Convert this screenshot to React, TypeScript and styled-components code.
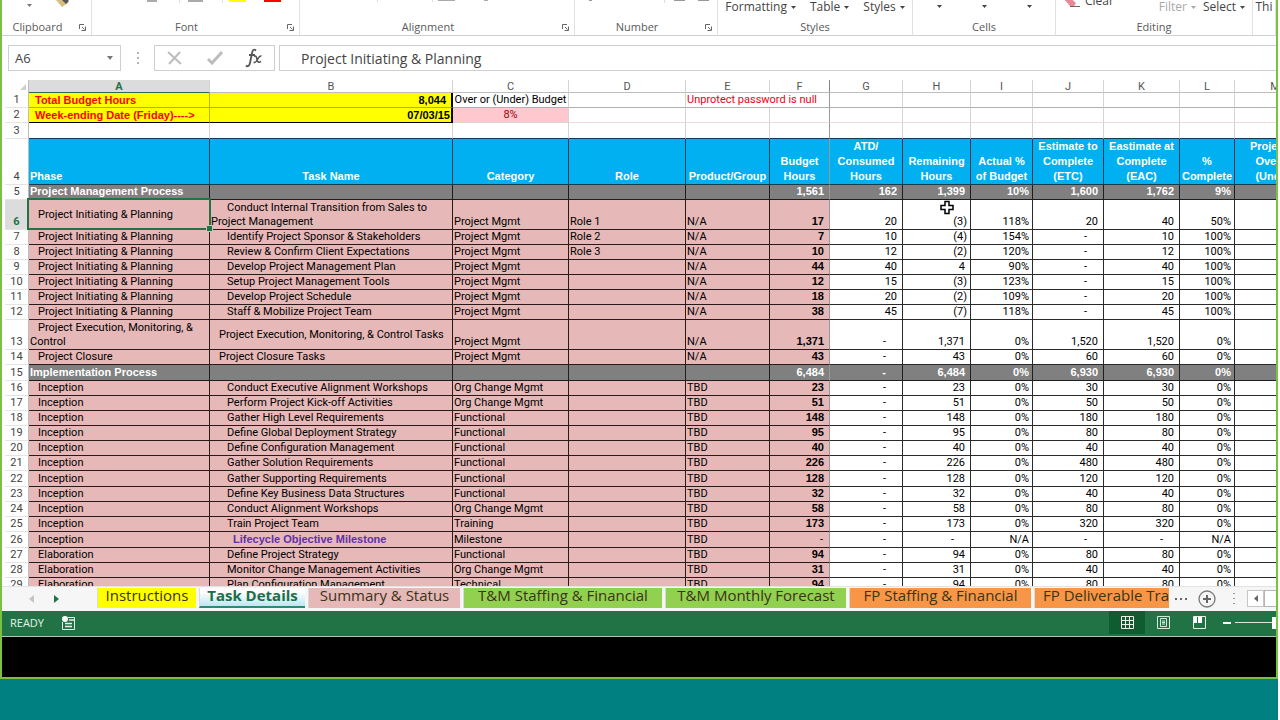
import React from "react";
import styled, { createGlobalStyle, css } from "styled-components";

const GlobalStyle = createGlobalStyle`
  *, *::before, *::after { box-sizing: border-box; }
  body { margin: 0; background: #fff; }
  button, input { font: inherit; color: inherit; border: 0; padding: 0; margin: 0; background: none; }
`;

const uiFont = `"Open Sans", "Noto Sans", sans-serif`;
const gridFont = `Roboto, "Liberation Sans", sans-serif`;
const boldFont = `"Liberation Sans", Arial, sans-serif`;

const Screen = styled.div`
  height: 100vh;
  display: flex;
  flex-direction: column;
  margin-right: 2px;
  background: #008080;
  font-family: ${uiFont};
  color: #444;
  overflow: hidden;
`;

const Window = styled.main`
  flex: 1;
  min-height: 0;
  display: flex;
  flex-direction: column;
  border: solid #7ac142;
  border-width: 0 2px 2px 2px;
  background: #fff;
`;

const Desktop = styled.footer`
  flex: none;
  height: 41px;
`;

/* Ribbon */
const Ribbon = styled.header`
  flex: none;
  display: grid;
  grid-template-columns: 90px 208px 275px 143px 195px 143px 197px 1fr;
  height: 36px;
  padding-bottom: 3px;
  border-bottom: 1px solid #d0d0d0;
  overflow: hidden;
`;

const Group = styled.section`
  display: flex;
  flex-direction: column;
  border-right: 1px solid #e2e2e2;
  min-width: 0;
`;

const Tools = styled.div<{ $gap?: number; $justify?: string }>`
  flex: none;
  height: 18px;
  display: flex;
  align-items: flex-end;
  justify-content: ${(p) => p.$justify ?? "center"};
  gap: ${(p) => p.$gap ?? 0}px;
`;

const GroupFoot = styled.div`
  display: flex;
  align-items: center;
  height: 18px;
`;

const GroupName = styled.span`
  flex: 1;
  text-align: center;
  font-size: 11px;
  line-height: 16px;
  color: #5a5a5a;
`;

const Launcher = styled.button`
  width: 18px;
  height: 12px;
  display: flex;
  align-items: center;
  justify-content: center;
`;

const ToolButton = styled.button<{ $muted?: boolean; $wide?: boolean; $lift?: boolean }>`
  display: flex;
  align-items: center;
  justify-content: center;
  gap: 4px;
  width: ${(p) => (p.$wide ? "45px" : "auto")};
  height: ${(p) => (p.$wide ? "24px" : "22px")};
  font-size: 12px;
  line-height: 22px;
  white-space: nowrap;
  flex: none;
  color: ${(p) => (p.$muted ? "#a8a8a8" : "#444")};
  ${(p) => p.$lift && css`align-self: flex-start; gap: 4px; margin: -10px 0 0 8px;`}
`;

const Caret = () => (
  <svg width="5" height="3" viewBox="0 0 5 3" aria-hidden="true">
    <path d="M0 0h5L2.500 3z" fill="currentColor" />
  </svg>
);

const LauncherIcon = () => (
  <svg width="7" height="7" viewBox="0 0 7 7" aria-hidden="true">
    <path d="M.5 5V.5H5M3 3l2.500 2.500M6.500 2.500v4h-4" fill="none" stroke="#666" />
  </svg>
);

/* Formula bar */
const FormulaBar = styled.div`
  flex: none;
  display: flex;
  height: 44px;
  padding: 9px 0 9px 6px;
  color: #444;
`;

const NameBox = styled.div`
  display: flex;
  width: 113px;
  border: 1px solid #cfcfcf;
  align-items: center;
`;

const NameInput = styled.input`
  flex: 1;
  min-width: 0;
  padding-left: 6px;
  font-size: 13px;
`;

const DropButton = styled.button`
  display: flex;
  align-items: center;
  justify-content: center;
  width: 20px;
  height: 20px;
  color: #777;
`;

const Dots = styled.span`
  width: 33px;
  display: flex;
  align-items: center;
  justify-content: center;
`;

const EntryButtons = styled.div`
  display: flex;
  width: 121px;
  border: 1px solid #cfcfcf;
  margin-right: 4px;
`;

const EntryButton = styled.button`
  flex: 1;
  display: flex;
  align-items: center;
  justify-content: center;
`;

const FormulaInput = styled.input`
  flex: 1;
  min-width: 0;
  border: solid #cfcfcf;
  border-width: 1px 0 1px 1px;
  padding-left: 21px;
  font-size: 14px;
`;

/* Sheet */
const Sheet = styled.div`
  flex: 1;
  min-height: 0;
  overflow: hidden;
  position: relative;
  padding-left: 3px;
`;

const Grid = styled.table`
  table-layout: fixed;
  width: 1311px;
  border-collapse: separate;
  border-spacing: 0;
  font-family: ${gridFont};
  font-size: 11px;
  line-height: 14px;
  color: #000;
`;

const Col = styled.col<{ $w: number }>`
  width: ${(p) => p.$w}px;
`;

const Row = styled.tr<{ $h: number }>`
  height: ${(p) => p.$h}px;
`;

const Letter = styled.th<{ $on?: boolean }>`
  padding: 1px 0 0;
  height: 13px;
  line-height: 11px;
  font-weight: ${(p) => (p.$on ? 700 : 400)};
  color: ${(p) => (p.$on ? "#217346" : "#555")};
  background: ${(p) => (p.$on ? "#dcdcdc" : "#fff")};
  border-right: 1px solid #d4d4d4;
  border-bottom: 1px solid ${(p) => (p.$on ? "#217346" : "#bdbdbd")};
  &:nth-child(7) { border-right-color: #888; }
`;

const Corner = styled.td`
  padding: 0 2px 0 0;
  text-align: right;
  line-height: 0;
  border-right: 1px solid #bdbdbd;
`;

const RowNumber = styled.th<{ $on?: boolean }>`
  padding: 0;
  font-weight: ${(p) => (p.$on ? 700 : 400)};
  color: ${(p) => (p.$on ? "#217346" : "#444")};
  background: ${(p) => (p.$on ? "#dcdcdc" : "#fff")};
  vertical-align: bottom;
  text-align: center;
  border-right: 1px solid ${(p) => (p.$on ? "#217346" : "#bdbdbd")};
  border-bottom: 1px solid #e4e4e4;
`;

type Kind = "blank" | "total" | "note" | "over" | "head" | "section" | "pink" | "plain";

const kinds = {
  blank: css`border-color: #d4d4d4;`,
  total: css`background: #ff0; font: 700 11px/14px ${boldFont}; border-color: #b5b500;`,
  note: css`color: #f00020; border-color: #d4d4d4;`,
  over: css`background: #ffc7ce; color: #9c0006; border-color: #d4d4d4;`,
  head: css`background: #00b0f0; color: #fff; font: 700 11px/15px ${boldFont}; border-color: #143c50;`,
  section: css`background: #808080; color: #fff; font: 700 11px/12px ${boldFont}; padding-bottom: 2px; border-color: #1e1e1e;`,
  pink: css`background: #e6b8b7; border-color: #2a1a1a;`,
  plain: css`background: #fff; border-color: #2a2a2a;`,
};

const Cell = styled.td<{
  $kind: Kind;
  $align?: "left" | "center" | "right";
  $pad?: number;
  $indent?: number;
  $middle?: boolean;
  $bold?: boolean;
  $frozen?: boolean;
  $under?: string;
  $heavy?: boolean;
  $red?: boolean;
  $oneLine?: boolean;
}>`
  padding: 0 ${(p) => p.$pad ?? 1}px;
  text-align: ${(p) => p.$align ?? "left"};
  text-indent: ${(p) => p.$indent ?? 0}px;
  vertical-align: ${(p) => (p.$middle ? "middle" : "bottom")};
  border-style: solid;
  border-width: 0 1px 1px 0;
  ${(p) => kinds[p.$kind]}
  ${(p) => p.$bold && css`font-family: ${boldFont}; font-weight: 700; line-height: 12px; padding-bottom: 2px;`}
  ${(p) => p.$frozen && css`border-right-color: #999;`}
  ${(p) => p.$under && css`border-bottom-color: ${p.$under};`}
  ${(p) => p.$heavy && css`border-right: 2px solid #000;`}
  ${(p) => p.$red && css`color: #f00;`}
  ${(p) => p.$oneLine && css`white-space: nowrap;`}
`;

const Milestone = styled.strong`
  font: 700 11px/14px ${boldFont};
  color: #6030a8;
  padding-left: 6px;
`;

const Selection = styled.div`
  position: absolute;
  left: 25px;
  top: 118px;
  width: 184px;
  height: 32px;
  border: 2px solid #217346;
  &::after {
    content: "";
    position: absolute;
    right: -3px;
    bottom: -3px;
    width: 5px;
    height: 5px;
    background: #217346;
    outline: 1px solid #e6b8b7;
  }
`;

const Pointer = styled.svg`
  position: absolute;
  left: 938px;
  top: 120px;
`;

/* Sheet tabs */
const TabBar = styled.nav`
  flex: none;
  display: flex;
  align-items: center;
  height: 25px;
  padding: 0 0 1px 2px;
  background: #f6f6f6;
  border-top: 1px solid #e3e3e3;
  overflow: hidden;
`;

const TabNav = styled.div`
  flex: none;
  width: 93px;
  display: flex;
  align-items: center;
  padding-left: 15px;
`;

const NavButton = styled.button`
  display: flex;
  align-items: center;
  justify-content: center;
  width: 25px;
  height: 18px;
`;

const TabList = styled.div`
  display: flex;
  height: 21px;
  align-self: flex-start;
  padding-top: 1px;
  gap: 3px;
`;

const Tab = styled.button<{ $bg: string; $w: number; $on?: boolean }>`
  flex: none;
  width: ${(p) => p.$w}px;
  padding-bottom: ${(p) => (p.$on ? 3 : 5)}px;
  border-left: 1px solid #dadada;
  border-bottom: ${(p) => (p.$on ? "2px solid #2f8a72" : "0 solid")};
  background: ${(p) => p.$bg};
  color: ${(p) => (p.$on ? "#1e6e46" : "#3a3418")};
  font-size: 15px;
  line-height: 15px;
  font-weight: ${(p) => (p.$on ? 700 : 400)};
  white-space: nowrap;
`;

const CutTab = styled(Tab)`
  text-align: right;
`;

const TabTail = styled.div`
  flex: 1;
  min-width: 0;
  display: flex;
  align-items: center;
  overflow: hidden;
`;

const TailButton = styled.button<{ $w: number }>`
  flex: none;
  width: ${(p) => p.$w}px;
  height: 20px;
  display: flex;
  align-items: center;
  justify-content: center;
`;

const ScrollArrow = styled(TailButton)`
  height: 17px;
  border: 1px solid #c6c6c6;
  background: #fff;
`;

const ScrollThumb = styled.div`
  flex: 1;
  height: 17px;
  border: solid #b5b5b5;
  border-width: 1px 0 1px 1px;
  background: #fff;
`;

/* Status bar */
const StatusBar = styled.div`
  flex: none;
  display: flex;
  align-items: center;
  height: 26px;
  padding: 0 0 2px 8px;
  background: #217346;
  border-bottom: 1px solid #b4c4b8;
  color: #e6f2ea;
  font-size: 11px;
`;

const MacroButton = styled.button`
  margin-left: 18px;
  display: flex;
`;

const Spring = styled.div`
  flex: 1;
`;

const ViewButton = styled.button<{ $on?: boolean }>`
  width: 36px;
  height: 23px;
  display: flex;
  align-items: center;
  justify-content: center;
  background: ${(p) => (p.$on ? "#0e5c2f" : "transparent")};
`;

const ZoomOut = styled.button`
  width: 18px;
  height: 23px;
  padding-right: 4px;
  display: flex;
  align-items: center;
  justify-content: flex-end;
`;

const ZoomRange = styled.input`
  appearance: none;
  width: 41px;
  height: 12px;
  background: linear-gradient(#d8eadf, #d8eadf) center / 100% 1px no-repeat;
  &::-webkit-slider-thumb {
    appearance: none;
    width: 4px;
    height: 12px;
    background: #fff;
  }
`;

const BlackBand = styled.div`
  flex: none;
  height: 40px;
  background: #000;
`;

const columns = [24, 181, 243, 116, 117, 84, 60, 73, 68, 62, 71, 76, 55, 81];
const letters = ["A", "B", "C", "D", "E", "F", "G", "H", "I", "J", "K", "L", "M"];

const heads = [
  "Phase", "Task Name", "Category", "Role", "Product/Group", "Budget|Hours", "ATD/|Consumed|Hours",
  "Remaining|Hours", "Actual %|of Budget", "Estimate to|Complete|(ETC)", "Eastimate at|Complete|(EAC)",
  "%|Complete", "Projected|Over or|(Under)",
];

interface Item {
  n: number;
  h?: number;
  phase: string;
  task?: string;
  category?: string;
  role?: string;
  product?: string;
  /* budget, consumed, remaining, actual %, ETC, EAC, % complete */
  v: string[];
  indent?: number;
}

const init = "Project Initiating & Planning";
const pm = "Project Mgmt";
const org = "Org Change Mgmt";
const fn = "Functional";

const open = (n: number, phase: string, task: string, category: string, hours: string, etc: string, h?: number): Item => ({
  n, phase, task, category, product: "TBD", h, v: [hours, "-", hours, "0%", etc, etc, "0%"],
});

const items: Item[] = [
  { n: 5, phase: "Project Management Process", v: ["1,561", "162", "1,399", "10%", "1,600", "1,762", "9%"] },
  { n: 6, h: 30, phase: init, task: "Conduct Internal Transition from Sales to Project Management", category: pm, role: "Role 1", product: "N/A", v: ["17", "20", "(3)", "118%", "20", "40", "50%"] },
  { n: 7, phase: init, task: "Identify Project Sponsor & Stakeholders", category: pm, role: "Role 2", product: "N/A", v: ["7", "10", "(4)", "154%", "-", "10", "100%"] },
  { n: 8, phase: init, task: "Review & Confirm Client Expectations", category: pm, role: "Role 3", product: "N/A", v: ["10", "12", "(2)", "120%", "-", "12", "100%"] },
  { n: 9, phase: init, task: "Develop Project Management Plan", category: pm, product: "N/A", v: ["44", "40", "4", "90%", "-", "40", "100%"] },
  { n: 10, phase: init, task: "Setup Project Management Tools", category: pm, product: "N/A", v: ["12", "15", "(3)", "123%", "-", "15", "100%"] },
  { n: 11, phase: init, task: "Develop Project Schedule", category: pm, product: "N/A", v: ["18", "20", "(2)", "109%", "-", "20", "100%"] },
  { n: 12, phase: init, task: "Staff & Mobilize Project Team", category: pm, product: "N/A", v: ["38", "45", "(7)", "118%", "-", "45", "100%"] },
  { n: 13, h: 30, phase: "Project Execution, Monitoring, & Control", task: "Project Execution, Monitoring, & Control Tasks", indent: 8, category: pm, product: "N/A", v: ["1,371", "-", "1,371", "0%", "1,520", "1,520", "0%"] },
  { n: 14, phase: "Project Closure", task: "Project Closure Tasks", indent: 8, category: pm, product: "N/A", v: ["43", "-", "43", "0%", "60", "60", "0%"] },
  { n: 15, h: 16, phase: "Implementation Process", v: ["6,484", "-", "6,484", "0%", "6,930", "6,930", "0%"] },
  open(16, "Inception", "Conduct Executive Alignment Workshops", org, "23", "30"),
  open(17, "Inception", "Perform Project Kick-off Activities", org, "51", "50"),
  open(18, "Inception", "Gather High Level Requirements", fn, "148", "180"),
  open(19, "Inception", "Define Global Deployment Strategy", fn, "95", "80"),
  open(20, "Inception", "Define Configuration Management", fn, "40", "40"),
  open(21, "Inception", "Gather Solution Requirements", fn, "226", "480"),
  open(22, "Inception", "Gather Supporting Requirements", fn, "128", "120", 16),
  open(23, "Inception", "Define Key Business Data Structures", fn, "32", "40"),
  open(24, "Inception", "Conduct Alignment Workshops", org, "58", "80"),
  open(25, "Inception", "Train Project Team", "Training", "173", "320"),
  { n: 26, phase: "Inception", task: "Lifecycle Objective Milestone", category: "Milestone", product: "TBD", v: ["-", "-", "-", "N/A", "-", "-", "N/A"] },
  open(27, "Elaboration", "Define Project Strategy", fn, "94", "80"),
  open(28, "Elaboration", "Monitor Change Management Activities", org, "31", "40"),
  open(29, "Elaboration", "Plan Configuration Management", "Technical", "94", "80"),
];

const padFor = (value: string, i: number) => {
  if (value === "-") return i === 0 ? 6 : 16;
  if (value.startsWith("(")) return 3;
  return i === 3 || i === 6 ? 3 : 5;
};

const lines = (text: string) =>
  text.split("|").map((part, i) => (
    <React.Fragment key={part}>
      {i > 0 && <br />}
      {part}
    </React.Fragment>
  ));

const ItemRow = ({ item }: { item: Item }) => {
  const section = !item.task;
  const left: Kind = section ? "section" : "pink";
  const right: Kind = section ? "section" : "plain";
  return (
    <Row $h={item.h ?? 15}>
      <RowNumber scope="row" $on={item.n === 6}>{item.n}</RowNumber>
      <Cell $kind={left} $middle $indent={section ? 0 : 8}>{item.phase}</Cell>
      <Cell $kind={left} $middle={item.n === 13} $indent={item.indent ?? 16}>
        {item.n === 26 ? <Milestone>{item.task}</Milestone> : item.task}
      </Cell>
      <Cell $kind={left}>{item.category}</Cell>
      <Cell $kind={left}>{item.role}</Cell>
      <Cell $kind={left}>{item.product}</Cell>
      {item.v.map((value, i) => (
        <Cell
          key={i}
          $kind={i === 0 ? left : right}
          $align="right"
          $pad={padFor(value, i)}
          $bold={i === 0 && value !== "-"}
          $frozen={i === 0}
        >
          {value}
        </Cell>
      ))}
      <Cell $kind={right} />
    </Row>
  );
};

const blanks = (count: number, frozenAt: number, under?: string) =>
  Array.from({ length: count }, (_, i) => <Cell key={i} $kind="blank" $frozen={i === frozenAt} $under={under} />);

const tabs = [
  { name: "Instructions", bg: "#ffff00", w: 99 },
  { name: "Task Details", bg: "linear-gradient(#ffffff 20%, #bfe6f2)", w: 106, on: true },
  { name: "Summary & Status", bg: "#e6b8b7", w: 152 },
  { name: "T&M Staffing & Financial", bg: "#92d050", w: 199 },
  { name: "T&M Monthly Forecast", bg: "#92d050", w: 181 },
  { name: "FP Staffing & Financial", bg: "#f79646", w: 182 },
];

export default function App() {
  return (
    <Screen>
      <GlobalStyle />
      <Window>
        <Ribbon>
          <Group>
            <Tools $justify="flex-start">
              <svg width="89" height="18" viewBox="0 0 89 18" aria-hidden="true">
                <path d="M25 4h5l-2.500 3z" fill="#777" />
                <path d="M54 0l6 7 6-4-2-3z" fill="#d9bd7d" />
                <path d="M60 0l4 4 3-3-1-1z" fill="#555" />
              </svg>
            </Tools>
            <GroupFoot>
              <GroupName>Clipboard</GroupName>
              <Launcher aria-label="Clipboard settings"><LauncherIcon /></Launcher>
            </GroupFoot>
          </Group>
          <Group>
            <Tools $justify="flex-start">
              <svg width="207" height="18" viewBox="0 0 207 18" aria-hidden="true">
                <path d="M55 0h10v2H55zM96 0h15v2H96z" fill="#aaa" />
                <path d="M87.500 0v3M130.500 0v3" stroke="#ddd" />
                <path d="M137 0h17v2h-17z" fill="#ff0" />
                <path d="M172 0h17v2h-17z" fill="#f00" />
              </svg>
            </Tools>
            <GroupFoot>
              <GroupName>Font</GroupName>
              <Launcher aria-label="Font settings"><LauncherIcon /></Launcher>
            </GroupFoot>
          </Group>
          <Group>
            <Tools $justify="flex-start">
              <svg width="274" height="18" viewBox="0 0 274 18" aria-hidden="true">
                <path d="M138 0h17v1h-17zM184 0h4v1h-4z" fill="#aaa" />
                <path d="M132.500 0v2M77.500 0v2" stroke="#ddd" />
              </svg>
            </Tools>
            <GroupFoot>
              <GroupName>Alignment</GroupName>
              <Launcher aria-label="Alignment settings"><LauncherIcon /></Launcher>
            </GroupFoot>
          </Group>
          <Group>
            <Tools $justify="flex-start">
              <svg width="142" height="18" viewBox="0 0 142 18" aria-hidden="true">
                <path d="M14 0h3v1h-3zM99 0h11v1H99zM123 0h11v1h-11z" fill="#999" />
                <path d="M89.500 0v3" stroke="#ddd" />
              </svg>
            </Tools>
            <GroupFoot>
              <GroupName>Number</GroupName>
              <Launcher aria-label="Number settings"><LauncherIcon /></Launcher>
            </GroupFoot>
          </Group>
          <Group>
            <Tools $gap={14}>
              <ToolButton>Formatting <Caret /></ToolButton>
              <ToolButton>Table <Caret /></ToolButton>
              <ToolButton>Styles <Caret /></ToolButton>
            </Tools>
            <GroupFoot><GroupName>Styles</GroupName></GroupFoot>
          </Group>
          <Group>
            <Tools>
              <ToolButton $wide aria-label="Insert"><Caret /></ToolButton>
              <ToolButton $wide aria-label="Delete"><Caret /></ToolButton>
              <ToolButton $wide aria-label="Format"><Caret /></ToolButton>
            </Tools>
            <GroupFoot><GroupName>Cells</GroupName></GroupFoot>
          </Group>
          <Group>
            <Tools $gap={7} $justify="flex-end">
              <ToolButton $lift>
                <svg width="17" height="14" viewBox="0 0 17 14" aria-hidden="true">
                  <path d="M0 5l3-4 9 8-2 3H6z" fill="#e8889a" />
                  <path d="M6 12.500h10" stroke="#666" />
                </svg>
                Clear
              </ToolButton>
              <Spring />
              <ToolButton $muted>Filter <Caret /></ToolButton>
              <ToolButton>Select <Caret /></ToolButton>
              <span />
            </Tools>
            <GroupFoot><GroupName>Editing</GroupName></GroupFoot>
          </Group>
          <Group>
            <Tools>
              <ToolButton>Thi</ToolButton>
            </Tools>
          </Group>
        </Ribbon>

        <FormulaBar>
          <NameBox>
            <NameInput aria-label="Name box" defaultValue="A6" />
            <DropButton aria-label="Named ranges">
              <svg width="6" height="4" viewBox="0 0 6 4" aria-hidden="true"><path d="M0 0h6L3 4z" fill="currentColor" /></svg>
            </DropButton>
          </NameBox>
          <Dots>
            <svg width="2" height="12" viewBox="0 0 2 12" aria-hidden="true">
              <path d="M0 0h2v2H0zM0 5h2v2H0zM0 10h2v2H0z" fill="#b5b5b5" />
            </svg>
          </Dots>
          <EntryButtons>
            <EntryButton aria-label="Cancel">
              <svg width="15" height="14" viewBox="0 0 15 14" aria-hidden="true"><path d="M1 1l13 12M13 1L2 13" stroke="#bdbdbd" strokeWidth="2" /></svg>
            </EntryButton>
            <EntryButton aria-label="Enter">
              <svg width="16" height="14" viewBox="0 0 16 14" aria-hidden="true"><path d="M1 8l4 4L15 1" fill="none" stroke="#bdbdbd" strokeWidth="3" /></svg>
            </EntryButton>
            <EntryButton aria-label="Insert function">
              <svg width="18" height="20" viewBox="0 0 18 20" aria-hidden="true">
                <path d="M11 2.500C9 .5 7.500 2 7 5L5 15c-.5 3-2.500 4-4 2.500M4 7h6" fill="none" stroke="#555" strokeWidth="1.800" />
                <path d="M9 8.500c2-1.500 2.500.5 3 3s1.500 3.500 4 2M16.500 8c-2-.5-3 1.500-4 3.500s-2 3.500-4 3" fill="none" stroke="#555" strokeWidth="1.500" />
              </svg>
            </EntryButton>
          </EntryButtons>
          <FormulaInput aria-label="Formula" defaultValue="Project Initiating & Planning" />
        </FormulaBar>

        <Sheet>
          <Grid>
            <colgroup>{columns.map((w, i) => <Col key={i} $w={w} />)}</colgroup>
            <thead>
              <tr>
                <Corner>
                  <svg width="6" height="6" viewBox="0 0 6 6" aria-hidden="true"><path d="M6 0v6H0z" fill="#cfcfcf" /></svg>
                </Corner>
                {letters.map((l) => <Letter key={l} scope="col" $on={l === "A"}>{l}</Letter>)}
              </tr>
            </thead>
            <tbody>
              <Row $h={15}>
                <RowNumber scope="row">1</RowNumber>
                <Cell $kind="total" $red $indent={5}>Total Budget Hours</Cell>
                <Cell $kind="total" $align="right" $pad={5} $heavy>8,044</Cell>
                <Cell $kind="blank" $under="#b0b0b0" $align="center" $pad={0} $oneLine>Over or (Under) Budget</Cell>
                <Cell $kind="blank" $under="#b0b0b0" />
                <Cell $kind="note" $under="#b0b0b0" $frozen colSpan={2}>Unprotect password is null</Cell>
                {blanks(7, -1, "#b0b0b0")}
              </Row>
              <Row $h={15}>
                <RowNumber scope="row">2</RowNumber>
                <Cell $kind="total" $red $indent={5} $under="#000">Week-ending Date (Friday)----&gt;</Cell>
                <Cell $kind="total" $align="right" $heavy $under="#000">07/03/15</Cell>
                <Cell $kind="over" $align="center">8%</Cell>
                {blanks(10, 2, "#ecdcdc")}
              </Row>
              <Row $h={16}>
                <RowNumber scope="row">3</RowNumber>
                {blanks(13, 5, "#143c50")}
              </Row>
              <Row $h={45}>
                <RowNumber scope="row">4</RowNumber>
                {heads.map((h, i) => (
                  <Cell key={h} $kind="head" $pad={i === 0 ? 1 : 0} $align={i === 0 ? "left" : "center"} $frozen={i === 5}>{lines(h)}</Cell>
                ))}
              </Row>
              {items.map((item) => <ItemRow key={item.n} item={item} />)}
            </tbody>
          </Grid>
          <Selection />
          <Pointer width="15" height="15" viewBox="0 0 15 15" aria-hidden="true">
            <path d="M5 1.500h4v4h4v4H9v4H5v-4H1v-4h4z" fill="#fff" stroke="#000" strokeWidth="1.500" />
          </Pointer>
        </Sheet>

        <TabBar>
          <TabNav>
            <NavButton aria-label="Previous sheets">
              <svg width="5" height="8" viewBox="0 0 5 8" aria-hidden="true"><path d="M5 0v8L0 4z" fill="#c4c4c4" /></svg>
            </NavButton>
            <NavButton aria-label="Next sheets">
              <svg width="5" height="8" viewBox="0 0 5 8" aria-hidden="true"><path d="M0 0v8l5-4z" fill="#217346" /></svg>
            </NavButton>
          </TabNav>
          <TabList>
            {tabs.map((t) => <Tab key={t.name} $bg={t.bg} $w={t.w} $on={t.on}>{t.name}</Tab>)}
            <CutTab $bg="#f79646" $w={135}>FP Deliverable Tra</CutTab>
          </TabList>
          <TabTail>
            <TailButton $w={24} aria-label="More sheets">
              <svg width="12" height="2" viewBox="0 0 12 2" aria-hidden="true"><path d="M0 0h2v2H0zM5 0h2v2H5zM10 0h2v2h-2z" fill="#666" /></svg>
            </TailButton>
            <TailButton $w={27} aria-label="New sheet">
              <svg width="18" height="18" viewBox="0 0 18 18" aria-hidden="true">
                <circle cx="9" cy="9" r="8" fill="none" stroke="#777" strokeWidth="1.300" />
                <path d="M9 5v8M5 9h8" stroke="#666" strokeWidth="2" />
              </svg>
            </TailButton>
            <TailButton $w={27} as="span">
              <svg width="2" height="11" viewBox="0 0 2 11" aria-hidden="true"><path d="M0 0h2v1H0zM0 5h2v1H0zM0 10h2v1H0z" fill="#999" /></svg>
            </TailButton>
            <ScrollArrow $w={17} aria-label="Scroll left">
              <svg width="4" height="7" viewBox="0 0 4 7" aria-hidden="true"><path d="M4 0v7L0 3.500z" fill="#666" /></svg>
            </ScrollArrow>
            <ScrollThumb />
          </TabTail>
        </TabBar>

        <StatusBar>
          <span>READY</span>
          <MacroButton aria-label="Record macro">
            <svg width="13" height="14" viewBox="0 0 13 14" aria-hidden="true">
              <path d="M6 1.500h6.500v12h-12V6" fill="none" stroke="#e6f2ea" />
              <path d="M7 4h5M3 7.500h7M3 10.500h7" stroke="#e6f2ea" strokeWidth="1.500" />
              <circle cx="3" cy="3" r="3" fill="#fff" />
            </svg>
          </MacroButton>
          <Spring />
          <ViewButton $on aria-label="Normal view">
            <svg width="13" height="13" viewBox="0 0 13 13" aria-hidden="true">
              <path d="M.5.5h12v12H.5zM4.500.5v12M8.500.5v12M.5 4.500h12M.5 8.500h12" fill="none" stroke="#e6f2ea" />
            </svg>
          </ViewButton>
          <ViewButton aria-label="Page layout view">
            <svg width="13" height="13" viewBox="0 0 13 13" aria-hidden="true">
              <path d="M.5.5h12v12H.5zM3.500 2.500h6v8h-6zM5 5h3M5 6.500h3M5 8h3" fill="none" stroke="#d5e8dc" />
            </svg>
          </ViewButton>
          <ViewButton aria-label="Page break view">
            <svg width="13" height="13" viewBox="0 0 13 13" aria-hidden="true">
              <path d="M.5.5h12v12H.5z" fill="none" stroke="#e6f2ea" />
              <path d="M1 1h3v6H1zM5 1h4v6H5z" fill="#fff" />
            </svg>
          </ViewButton>
          <ZoomOut aria-label="Zoom out">
            <svg width="8" height="2" viewBox="0 0 8 2" aria-hidden="true"><path d="M0 0h8v2H0z" fill="#fff" /></svg>
          </ZoomOut>
          <ZoomRange type="range" aria-label="Zoom" min={0} max={100} defaultValue={100} />
        </StatusBar>
        <BlackBand />
      </Window>
      <Desktop />
    </Screen>
  );
}
